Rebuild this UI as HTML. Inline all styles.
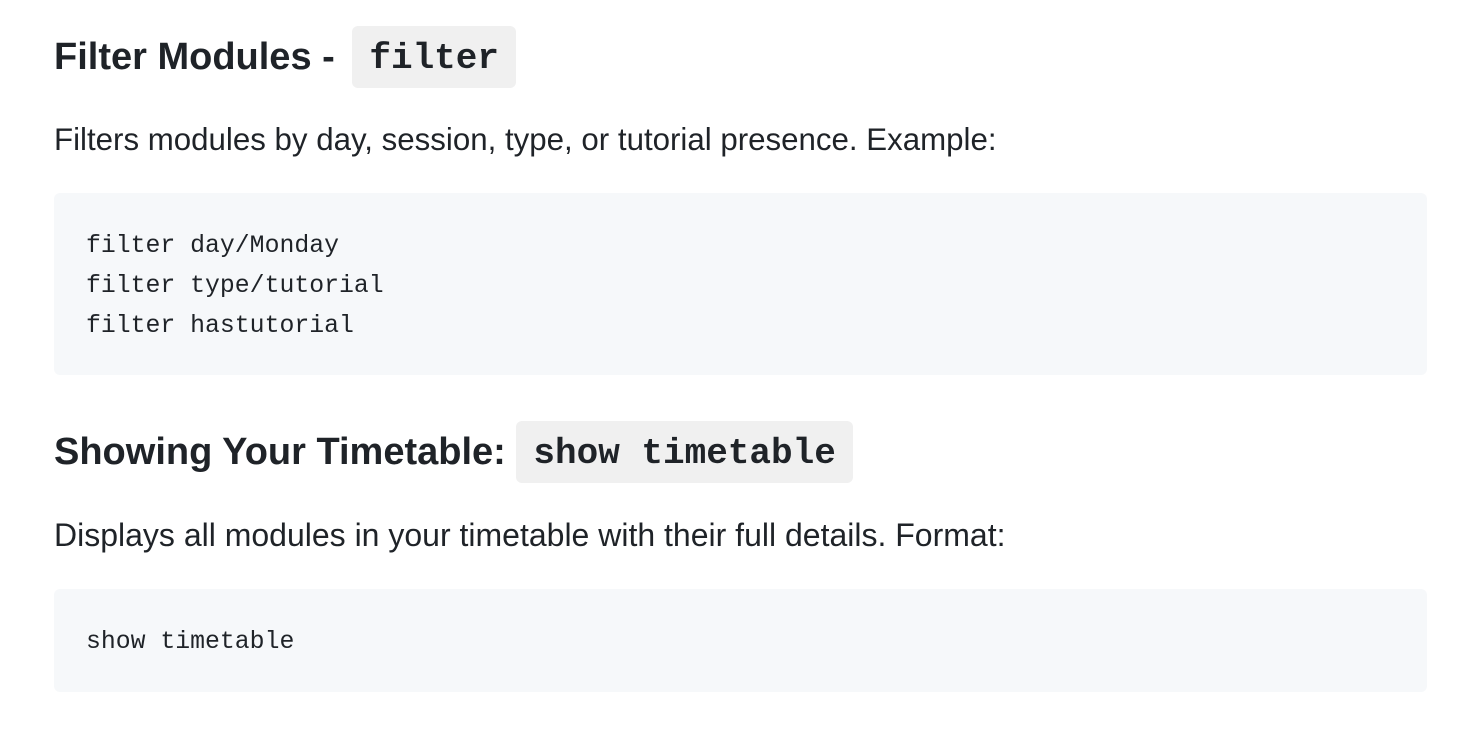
<!DOCTYPE html>
<html><head><style>
body{margin:0;width:1480px;height:734px;background:#fff;color:#1f2328;font-family:"Liberation Sans",sans-serif;position:relative;overflow:hidden}
.a{position:absolute;white-space:nowrap}
h2{margin:0;font-size:38px;font-weight:bold;line-height:62px}
.ic{display:inline-block;background:#f0f0f0;border-radius:6px;font-family:"Liberation Mono",monospace;font-size:36px;padding:0 17px;line-height:62px;vertical-align:top;position:relative}
.ic span{position:relative;top:2px}
p{margin:0;font-size:31.5px;line-height:40px}
.pre{position:absolute;left:54px;width:1373px;background:#f6f8fa;border-radius:6px}
.pre div{position:absolute;left:32px;font-family:"Liberation Mono",monospace;font-size:24.8px;line-height:40px;white-space:pre}
</style></head><body>
<h2 class="a" style="left:54px;top:26px">Filter Modules - <span class="ic" style="margin-left:7px"><span>filter</span></span></h2>
<p class="a" style="left:54px;top:120px;font-size:31.25px">Filters modules by day, session, type, or tutorial presence. Example:</p>
<div class="pre" style="top:193px;height:182px"><div style="top:33px">filter day/Monday
filter type/tutorial
filter hastutorial</div></div>
<h2 class="a" style="left:54px;top:421px">Showing Your Timetable: <span class="ic" style="margin-left:0px"><span>show timetable</span></span></h2>
<p class="a" style="left:54px;top:515px;font-size:32px">Displays all modules in your timetable with their full details. Format:</p>
<div class="pre" style="top:589px;height:103px"><div style="top:33px">show timetable</div></div>
</body></html>
